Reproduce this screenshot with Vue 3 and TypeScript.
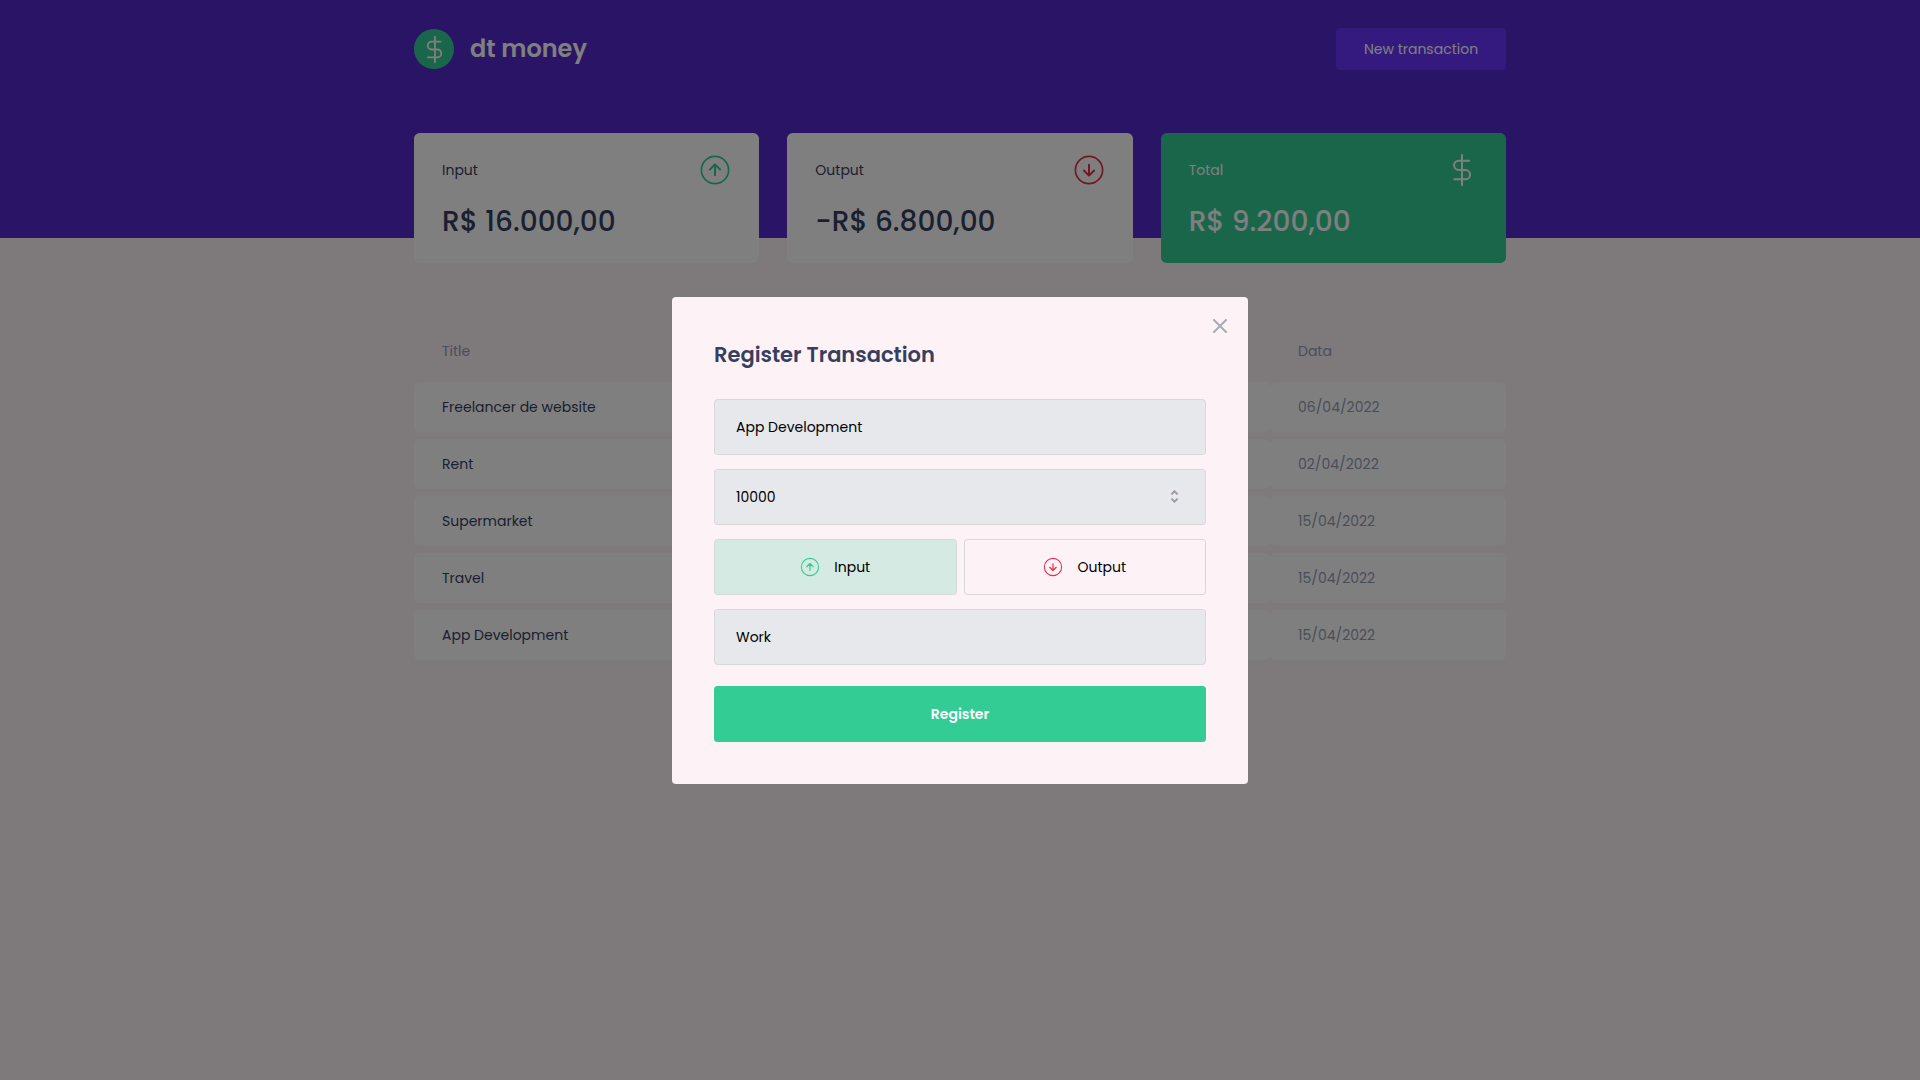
<script setup lang="ts">
interface Row {
  title: string
  date: string
}

const rows: Row[] = [
  { title: 'Freelancer de website', date: '06/04/2022' },
  { title: 'Rent', date: '02/04/2022' },
  { title: 'Supermarket', date: '15/04/2022' },
  { title: 'Travel', date: '15/04/2022' },
  { title: 'App Development', date: '15/04/2022' },
]
</script>

<template>
  <div class="page">
    <header class="header">
      <div class="header-content">
        <div class="logo">
          <span class="logo-mark">
            <svg width="27" height="27" viewBox="0 0 32 32" class="stroke bold">
              <path d="M16.5 .9v30.2M23.2 6.7H12.7a4.65 4.65 0 0 0 0 9.3h6.7a4.65 4.65 0 0 1 0 9.3H8.3" />
            </svg>
          </span>
          <span class="logo-text">dt money</span>
        </div>
        <button class="new-button" type="button">New transaction</button>
      </div>
    </header>

    <main class="container">
      <section class="summary">
        <article class="card">
          <div class="card-head">
            <span>Input</span>
            <svg width="32" height="32" viewBox="0 0 32 32" class="stroke green">
              <circle cx="16" cy="16" r="13.6" />
              <path class="arrow" d="M16 21.2V10.6M10.9 15.5 16 10.4l5.1 5.1" />
            </svg>
          </div>
          <strong>R$ 16.000,00</strong>
        </article>
        <article class="card">
          <div class="card-head">
            <span>Output</span>
            <svg width="32" height="32" viewBox="0 0 32 32" class="stroke red">
              <circle cx="16" cy="16" r="13.6" />
              <path class="arrow" d="M16 10.8v10.6M10.9 16.5l5.1 5.1 5.1-5.1" />
            </svg>
          </div>
          <strong>-R$ 6.800,00</strong>
        </article>
        <article class="card total">
          <div class="card-head">
            <span>Total</span>
            <svg width="32" height="32" viewBox="0 0 32 32" class="stroke dollar">
              <path d="M16 .9v30.2M23.2 6.7H12.7a4.65 4.65 0 0 0 0 9.3h6.7a4.65 4.65 0 0 1 0 9.3H8.3" />
            </svg>
          </div>
          <strong>R$ 9.200,00</strong>
        </article>
      </section>

      <section class="table">
        <div class="row head">
          <div class="cell">Title</div>
          <div class="cell"></div>
          <div class="cell">Data</div>
        </div>
        <div v-for="(row, i) in rows" :key="i" class="row">
          <div class="cell title">{{ row.title }}</div>
          <div class="cell"></div>
          <div class="cell">{{ row.date }}</div>
        </div>
      </section>
    </main>

    <div class="overlay">
      <div class="modal">
        <button class="close" type="button" aria-label="Close">
          <svg width="14" height="14" viewBox="0 0 14 14">
            <path d="M1 1l12 12M13 1 1 13" />
          </svg>
        </button>
        <h2>Register Transaction</h2>
        <div class="field">App Development</div>
        <div class="field">
          <span>10000</span>
          <span class="spinner">
            <svg width="9" height="13" viewBox="0 0 9 13">
              <path d="M1.4 4.4l3.1-3.1 3.1 3.1M1.4 8.6l3.1 3.1 3.1-3.1" />
            </svg>
          </span>
        </div>
        <div class="types">
          <button class="type active" type="button">
            <svg width="20" height="20" viewBox="0 0 32 32" class="stroke green">
              <circle cx="16" cy="16" r="13.8" />
              <path class="arrow" d="M16 21.2V10.6M10.9 15.5 16 10.4l5.1 5.1" />
            </svg>
            <span>Input</span>
          </button>
          <button class="type" type="button">
            <svg width="20" height="20" viewBox="0 0 32 32" class="stroke red">
              <circle cx="16" cy="16" r="13.8" />
              <path class="arrow" d="M16 10.8v10.6M10.9 16.5l5.1 5.1 5.1-5.1" />
            </svg>
            <span>Output</span>
          </button>
        </div>
        <div class="field">Work</div>
        <button class="submit" type="button">Register</button>
      </div>
    </div>
  </div>
</template>

<style>
body {
  margin: 0;
  background: #fdf2f6;
}
</style>

<style scoped>
.page {
  min-height: 1080px;
  background: #fdf2f6;
  color: #969cb3;
  font-family: Poppins, Inter, 'Open Sans', sans-serif;
  font-size: 14px;
  line-height: 21px;
}

.page * {
  box-sizing: border-box;
}

span,
strong {
  white-space: nowrap;
}

button {
  padding: 0;
  border: 0;
  font: inherit;
}

svg {
  display: block;
  flex: none;
}

.stroke {
  fill: none;
  stroke: #fff;
  stroke-width: 1.7;
  stroke-linecap: round;
  stroke-linejoin: round;
}

.stroke.dollar {
  stroke-width: 2;
}

.stroke.bold {
  stroke-width: 2.2;
}

.stroke .arrow {
  stroke-width: 2;
}

.stroke.green {
  stroke: #33cc95;
}

.stroke.red {
  stroke: #e52e4d;
}

.header {
  height: 238px;
  background: #5429cc;
}

.header-content {
  display: flex;
  align-items: center;
  justify-content: space-between;
  width: 1092px;
  margin: 0 auto;
  padding-top: 28px;
}

.logo {
  display: flex;
  align-items: center;
  gap: 16px;
}

.logo-mark {
  display: flex;
  align-items: center;
  justify-content: center;
  width: 40px;
  height: 40px;
  border-radius: 50%;
  background: #33cc95;
}

.logo-text {
  padding-bottom: 1px;
  color: #fff;
  font-size: 24px;
  font-weight: 600;
}

.new-button {
  width: 170px;
  height: 42px;
  border-radius: 4px;
  background: #6933ff;
  color: #fff;
}

.container {
  width: 1092px;
  margin: 0 auto;
}

.summary {
  display: grid;
  grid-template-columns: repeat(3, 1fr);
  gap: 28px;
  margin-top: -105px;
}

.card {
  height: 130px;
  padding: 21px 28px;
  border-radius: 5.6px;
  background: #fff;
  color: #363f5f;
}

.card.total {
  background: #33cc95;
  color: #fff;
}

.card-head {
  display: flex;
  align-items: center;
  justify-content: space-between;
}

.card strong {
  display: block;
  margin-top: 15px;
  font-size: 28px;
  font-weight: 500;
  line-height: 42px;
}

.table {
  display: flex;
  flex-direction: column;
  gap: 7px;
  margin-top: 62px;
}

.row {
  display: grid;
  grid-template-columns: 428px 428px 236px;
  height: 50px;
}

.cell {
  display: flex;
  align-items: center;
  padding: 0 28px;
  border-radius: 5.6px;
  background: #fff;
}

.head .cell {
  padding-top: 2px;
  background: none;
}

.title {
  color: #363f5f;
}

.overlay {
  position: fixed;
  inset: 0;
  display: flex;
  align-items: center;
  justify-content: center;
  padding-top: 1px;
  background: rgba(0, 0, 0, 0.5);
}

.modal {
  position: relative;
  display: flex;
  flex-direction: column;
  gap: 14px;
  width: 576px;
  height: 487px;
  padding: 42px;
  border-radius: 4px;
  background: #fdf2f6;
  color: #000;
}

.modal h2 {
  margin: 0 0 14px;
  color: #363f5f;
  font-size: 21px;
  font-weight: 600;
  line-height: 32px;
}

.close {
  position: absolute;
  top: 22px;
  right: 21px;
  background: none;
}

.close path {
  fill: none;
  stroke: #a9abb5;
  stroke-width: 2;
  stroke-linecap: round;
}

.field {
  display: flex;
  align-items: center;
  justify-content: space-between;
  height: 56px;
  padding: 0 22px 0 21px;
  border: 1px solid #d7d7d7;
  border-radius: 3.5px;
  background: #e6e8ec;
}

.spinner {
  display: flex;
  align-items: center;
  justify-content: center;
  width: 16px;
  height: 17px;
  margin: 0 0.5px 1px 0;
  background: #e9e8ec;
}

.spinner path {
  fill: none;
  stroke: #9b9ba5;
  stroke-width: 2;
}

.types {
  display: grid;
  grid-template-columns: 1fr 1fr;
  gap: 7px;
}

.type {
  display: flex;
  align-items: center;
  justify-content: center;
  gap: 14px;
  height: 56px;
  border: 1px solid #d7d7d7;
  border-radius: 3.5px;
  background: transparent;
  color: #000;
}

.type.active {
  background: #d5eae2;
}

.submit {
  height: 56px;
  margin-top: 7px;
  border-radius: 3.5px;
  background: #33cc95;
  color: #fff;
  font-weight: 600;
}
</style>
